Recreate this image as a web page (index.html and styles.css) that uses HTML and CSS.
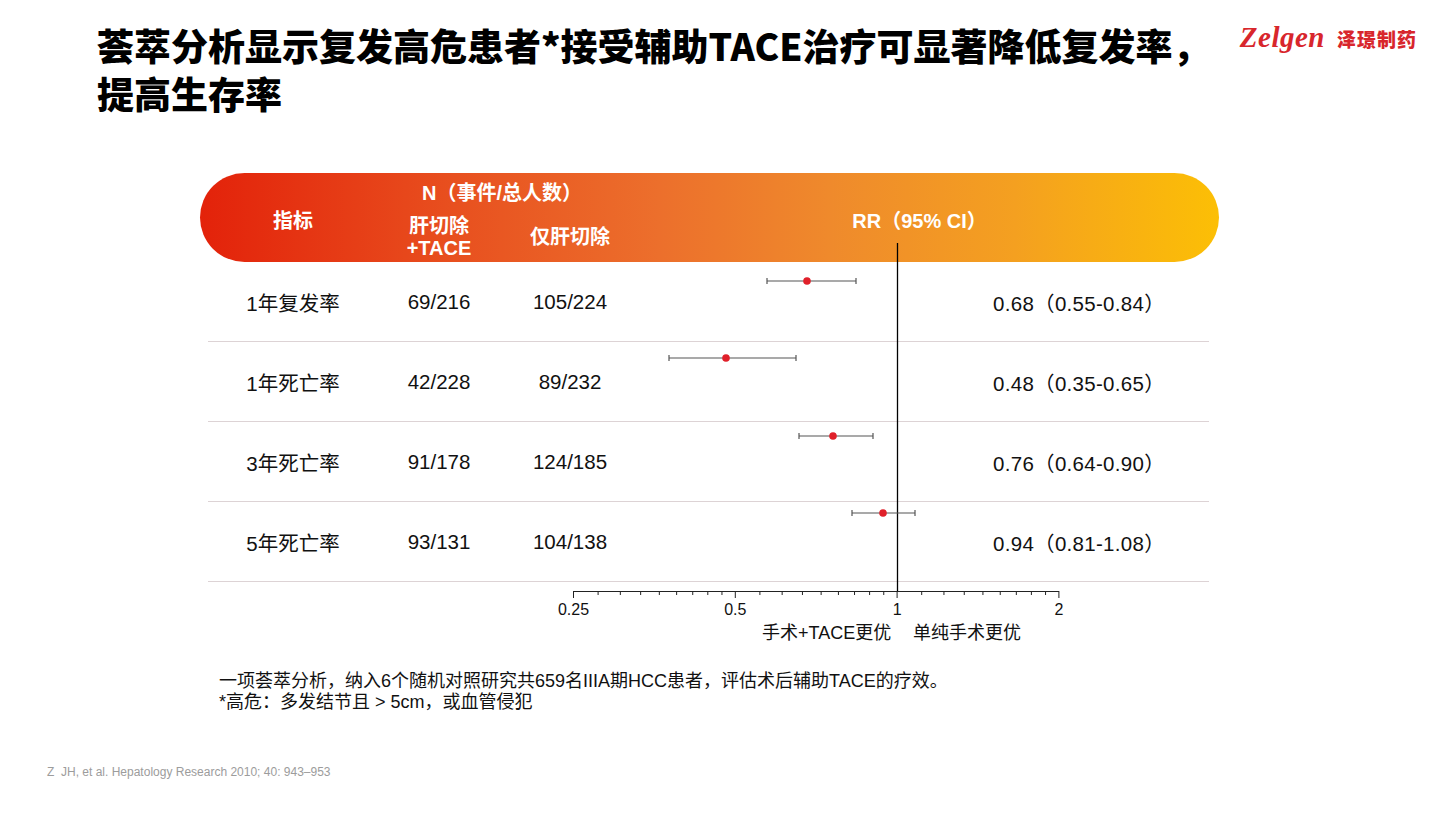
FILE: index.html
```html
<!DOCTYPE html>
<html lang="zh-CN">
<head>
<meta charset="utf-8">
<title>荟萃分析</title>
<link rel="stylesheet" href="styles.css">
</head>
<body>
<div class="slide">
  <header class="top">
    <h1 class="title"><span class="tl">荟萃分析显示复发高危患者*接受辅助TACE治疗可显著降低复发率，</span><span class="tl">提高生存率</span></h1>
    <div class="logo"><span class="logo-en">Zelgen</span><span class="logo-cn">泽璟制药</span></div>
  </header>

  <section class="forest">
    <div class="head">
      <div class="h-ind">指标</div>
      <div class="h-n">N（事件/总人数）</div>
      <div class="h-a">肝切除<br>+TACE</div>
      <div class="h-b">仅肝切除</div>
      <div class="h-rr">RR（95% CI）</div>
    </div>
    <div class="row"><div class="c-ind">1年复发率</div><div class="c-a">69/216</div><div class="c-b">105/224</div><div class="c-gap"></div><div class="c-rr">0.68（0.55-0.84）</div></div>
    <div class="row"><div class="c-ind">1年死亡率</div><div class="c-a">42/228</div><div class="c-b">89/232</div><div class="c-gap"></div><div class="c-rr">0.48（0.35-0.65）</div></div>
    <div class="row"><div class="c-ind">3年死亡率</div><div class="c-a">91/178</div><div class="c-b">124/185</div><div class="c-gap"></div><div class="c-rr">0.76（0.64-0.90）</div></div>
    <div class="row"><div class="c-ind">5年死亡率</div><div class="c-a">93/131</div><div class="c-b">104/138</div><div class="c-gap"></div><div class="c-rr">0.94（0.81-1.08）</div></div>

    <svg class="plot" width="1019" height="480" viewBox="200 173 1019 480" xmlns="http://www.w3.org/2000/svg">
      <g id="ticks" stroke="#222" stroke-width="1"></g>
      <line x1="573.5" y1="591.5" x2="1059" y2="591.5" stroke="#222" stroke-width="1"/>
      <line x1="897.5" y1="243" x2="897.5" y2="591" stroke="#000" stroke-width="1.3"/>
      <g stroke="#555" stroke-width="1.2">
        <line x1="767" y1="281" x2="856" y2="281"/><line x1="767" y1="278" x2="767" y2="284"/><line x1="856" y1="278" x2="856" y2="284"/>
        <line x1="669" y1="358" x2="796" y2="358"/><line x1="669" y1="355" x2="669" y2="361"/><line x1="796" y1="355" x2="796" y2="361"/>
        <line x1="799" y1="436" x2="873" y2="436"/><line x1="799" y1="433" x2="799" y2="439"/><line x1="873" y1="433" x2="873" y2="439"/>
        <line x1="852" y1="513" x2="915" y2="513"/><line x1="852" y1="510" x2="852" y2="516"/><line x1="915" y1="510" x2="915" y2="516"/>
      </g>
      <g fill="#e0202a">
        <circle cx="807" cy="281" r="3.8"/>
        <circle cx="726" cy="358" r="3.8"/>
        <circle cx="833" cy="436" r="3.8"/>
        <circle cx="883" cy="513" r="3.8"/>
      </g>
      <g class="axis-lab" text-anchor="middle">
        <text x="573.5" y="615">0.25</text>
        <text x="735.3" y="615">0.5</text>
        <text x="897.1" y="615">1</text>
        <text x="1059" y="615">2</text>
      </g>
      <g class="fav">
        <text x="762" y="639">手术+TACE更优</text>
        <text x="913" y="639">单纯手术更优</text>
      </g>
    </svg>
  </section>

  <div class="notes">
    <p>一项荟萃分析，纳入6个随机对照研究共659名IIIA期HCC患者，评估术后辅助TACE的疗效。</p>
    <p>*高危：多发结节且 &gt; 5cm，或血管侵犯</p>
  </div>

  <div class="cite">Z&nbsp; JH, et al. Hepatology Research 2010; 40: 943–953</div>
</div>
<script>
  (function () {
    var g = document.getElementById('ticks');
    var x0 = 573.5, per = 161.8, ns = 'http://www.w3.org/2000/svg';
    var bases = [0.25, 0.5, 1];
    function xOf(v) { return x0 + per * Math.log(v / 0.25) / Math.LN2; }
    function tick(x, len) {
      var l = document.createElementNS(ns, 'line');
      l.setAttribute('x1', x); l.setAttribute('x2', x);
      l.setAttribute('y1', 591); l.setAttribute('y2', 591 + len);
      g.appendChild(l);
    }
    bases.forEach(function (b) {
      tick(xOf(b), 7);
      for (var k = 1; k < 9; k++) tick(xOf(b * (1 + k / 9)), 4);
    });
    tick(xOf(2), 7);
  })();
</script>
</body>
</html>
```

FILE: styles.css
```css
* { box-sizing: border-box; }
html, body { margin: 0; padding: 0; background: #fff; }
body {
  font-family: "Liberation Sans", "Noto Sans CJK SC", sans-serif;
  color: #111;
}
.slide {
  width: 1451px;
  height: 816px;
  position: relative;
  overflow: hidden;
}
.top {
  display: flex;
  justify-content: space-between;
  align-items: flex-start;
  padding: 21px 34px 0 97px;
}
.title {
  margin: 0;
  font-family: "Noto Sans CJK SC", "Liberation Sans", sans-serif;
  font-size: 37px;
  line-height: 48px;
  font-weight: 900;
  color: #000;
  white-space: nowrap;
  letter-spacing: 0;
  display: flex;
  flex-direction: column;
}
.tl { display: block; height: 48px; }
.logo {
  display: flex;
  align-items: baseline;
  gap: 12px;
  flex-shrink: 0;
  white-space: nowrap;
  color: #d8262c;
}
.logo-en {
  font-family: "Liberation Serif", serif;
  font-style: italic;
  font-weight: bold;
  font-size: 29px;
  letter-spacing: 0.5px;
}
.logo-cn {
  font-family: "Noto Sans CJK SC", sans-serif;
  font-weight: 900;
  font-size: 19px;
  letter-spacing: 1px;
}

.forest {
  position: relative;
  width: 1019px;
  margin: 56px 0 0 200px;
}
.head {
  height: 89px;
  border-radius: 45px;
  background: linear-gradient(90deg, #e3220a 0%, #e8501f 25%, #ec6f2c 45%, #ef8a2c 62%, #f4a020 80%, #fcbf05 100%);
  color: #fff;
  font-weight: bold;
  font-size: 20px;
  line-height: 22px;
  display: grid;
  grid-template-columns: 186px 106px 156px 1fr;
  grid-template-rows: 22px 44px;
  row-gap: 11px;
  padding-top: 9px;
}
.h-ind { grid-column: 1; grid-row: 1 / 3; align-self: center; text-align: center; }
.h-n { grid-column: 2 / 4; grid-row: 1; text-align: center; padding-right: 30px; }
.h-a { grid-column: 2; grid-row: 2; text-align: center; }
.h-b { grid-column: 3; grid-row: 2; align-self: center; text-align: center; }
.h-rr { grid-column: 4; grid-row: 1 / 3; align-self: center; text-align: center; padding-right: 28px; }

.row {
  margin: 0 10px 0 8px;
  height: 80px;
  border-bottom: 1px solid #ddd3d5;
  display: grid;
  grid-template-columns: 170px 122px 140px 353px 1fr;
  align-items: center;
  font-size: 20.5px;
  color: #111;
}
.c-ind, .c-a, .c-b { text-align: center; }
.c-rr { text-align: left; letter-spacing: 0.3px; }

.plot {
  position: absolute;
  left: 0;
  top: 0;
  z-index: 2;
  overflow: visible;
}
.axis-lab text {
  font-family: "Liberation Sans", sans-serif;
  font-size: 16px;
  fill: #111;
}
.fav text {
  font-family: "Liberation Sans", "Noto Sans CJK SC", sans-serif;
  font-size: 18px;
  fill: #111;
}

.notes {
  margin: 89px 0 0 219px;
  font-size: 18px;
  line-height: 21px;
  color: #111;
}
.notes p { margin: 0; }

.cite {
  margin: 52px 0 0 47px;
  font-size: 12px;
  color: #9c9c9c;
}
```
